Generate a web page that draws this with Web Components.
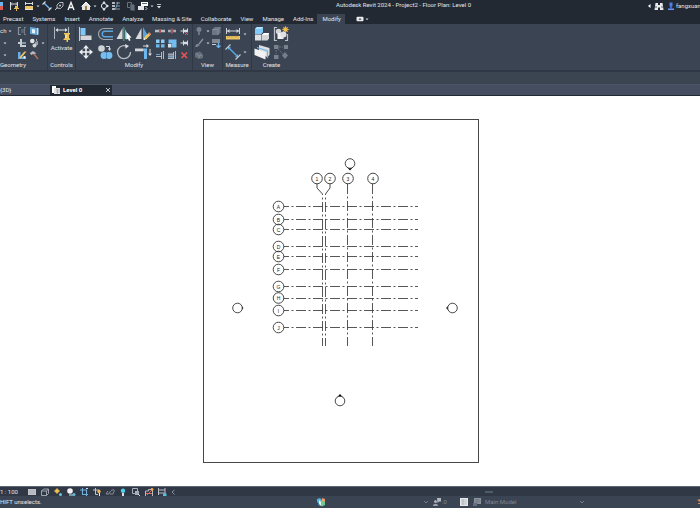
<!DOCTYPE html>
<html lang="en">
<head>
<meta charset="utf-8">
<title>Autodesk Revit 2024 - Project2 - Floor Plan: Level 0</title>
<style>
    html, body {
        height: 100%;
        margin: 0;
    }
    body {
        --bar-dark: #222933;
        --bar: #3b4453;
        --line: #303846;
        --text: #e2e5ea;
        --muted: #7d8694;
        color: var(--text);
        font: 6px/8px Roboto, "Open Sans", sans-serif;
        overflow: hidden;
    }
</style>
</head>
<body>
<revit-app></revit-app>

<script>
// Icon drawings: [width, height, markup]
const ICONS = {
    // quick access bar
    edge: [4, 10, '<path d="M0 1h3v4H0z" fill="#6fb4ea"/><path d="M0 5h3v4H0z" fill="#e2574f"/>'],
    dim: [10, 10, '<path d="M1.500 1v8M8.500 1v5M1.500 3h7" stroke="#d8dbe0"/><path d="M3 1.500L1.500 3 3 4.500M7 1.500L8.500 3 7 4.500" stroke="#d8dbe0" stroke-width=".7"/><path d="M6 5h3v2h1v1H8v2H7V8H5V7h1z" fill="#e6bd55"/>'],
    ruler: [10, 10, '<path d="M1.500 1v3M8.500 1v3M1 2.500h8" stroke="#d8dbe0"/><path d="M1 5h8v3.500H1z" fill="#efc765"/><path d="M1 8.500h8" stroke="#fff" stroke-width=".8"/>'],
    aligned: [10, 10, '<path d="M2 2l6 6" stroke="#6fb4ea" stroke-width="1.400"/><path d="M.5 3.500l3-3M6.500 9.500l3-3" stroke="#d8dbe0" stroke-width="1.200"/>'],
    tag: [10, 10, '<path d="M1 9l2.500-2.500" stroke="#c3c8cf"/><path d="M3 7V4l2.500-2.500H9V5L6.500 7.500z" stroke="#c3c8cf" stroke-width=".9"/><circle cx="6" cy="4.500" r="1" fill="#c3c8cf"/>'],
    letter: [10, 10, '<path d="M2 9L5 1.500 8 9M3.200 6.500h3.600" stroke="#f0f1f3" stroke-width="1.400"/>'],
    home: [10, 10, '<path d="M1 5l4-4 4 4v4H1z" fill="#e4e6e9"/><path d="M.5 5.500L5 1l4.500 4.500" stroke="#fff"/><path d="M4 5h2v4H4z" fill="#a47d3b"/>'],
    section: [10, 10, '<circle cx="5" cy="5" r="2.600" stroke="#e3e5e9"/><path d="M5 0l1.500 2h-3zM5 10l1.500-2h-3z" fill="#e3e5e9"/><path d="M8 3.500L10 5 8 6.500z" fill="#e3e5e9"/>'],
    thin: [10, 10, '<path d="M1 2h3M1 5h3M1 8h3" stroke="#e3e5e9" stroke-width="1.400"/><path d="M5 2h4M5 5h4M5 8h4" stroke="#a9b7c6" stroke-width=".8"/><path d="M4 9l3-8" stroke="#6fb4ea" stroke-width=".8"/>'],
    inactive: [10, 10, '<path d="M1.500 1.500h4v5h-4z" stroke="#6a727e"/><path d="M4 3h4v6H4z" fill="#505966"/><path d="M5 5h4M5 7h4M5 9h4" stroke="#858c97" stroke-width=".8"/>'],
    windows: [10, 10, '<path d="M3 1h7v4H3z" fill="#fff"/><path d="M4 2.500h5" stroke="#606976"/><path d="M0 5h6v4H0z" fill="#e3e5e9"/><path d="M7.500 6l1.500 1.500L7.500 9" stroke="#d8dbe0"/>'],
    caret: [4, 10, '<path d="M.5 4.500h3L2 6.200z" fill="#d0d4db"/>'],
    more: [6, 10, '<path d="M1 3.500h4" stroke="#e3e5e9" stroke-width=".8"/><path d="M1 5h4L3 7.500z" fill="#e3e5e9"/>'],
    left: [4, 10, '<path d="M3.500 3v4L1 5z" fill="#fff"/>'],
    binoculars: [10, 10, '<path d="M1.500 2h2.500v2h2V2h2.500L9.500 9H6V6.500H4V9H.5z" fill="#e8eaed"/><path d="M1 6h2M7 6h2" stroke="#59616d"/>'],
    person: [8, 10, '<path d="M2.500 1.500h3v4h-3z" fill="#4f7fe6"/><path d="M1 7.500h6V9H1z" fill="#6a97f5"/><path d="M3 5h2v3H3z" fill="#3c6bd2"/>'],
    panelmode: [10, 10, '<rect x="1.500" y="2.800" width="7" height="4.400" rx="1" fill="#e9ebee"/><path d="M3.500 5.800h3L5 4z" fill="#3a4250"/>'],

    // geometry
    cut: [10, 10, '<path d="M4 1.500H1.500v7H4" stroke="#89919d" stroke-width="1.200"/><path d="M4 4h3M4 6h3M9 1.500H7.500v7H9" stroke="#737c89" stroke-width="1.100"/>'],
    opening: [10, 10, '<path d="M1 1l7 1v7L1 8z" fill="#64aadd"/><path d="M3 3l3 .5v4L3 7z" fill="#e8f3fb"/><path d="M8 2h1.500v6.500L8 9z" fill="#bfe0f7"/>'],
    join: [10, 10, '<path d="M3 1h2v3h4v2H5v1h4v2H3V6H1V4h2z" fill="#c6cbd2"/><path d="M5 4h4v2H5z" fill="#7e99af"/>'],
    unite: [10, 10, '<circle cx="3.300" cy="3" r="2.300" fill="#e0e2e5"/><path d="M6 4l3-1v4H6z" fill="#9aa2ad"/><circle cx="5.500" cy="7.500" r="2" fill="#cfd3d8"/><path d="M7.500 1v2" stroke="#aab1ba"/>'],
    paint: [10, 10, '<path d="M1 2h2.500v5H9v2H1z" fill="#62aee8"/><path d="M3 8l5-6" stroke="#efc765" stroke-width="1.800"/><path d="M8 1.500l1 1" stroke="#e87962" stroke-width="1.500"/><path d="M6.500 6h2v2.500h-2z" fill="#e6eaf0"/>'],
    hammer: [10, 10, '<path d="M1 3l3-2 3 2-1.500 2L4 4 2 5z" fill="#b6bbc3"/><path d="M5 4l4 5" stroke="#b06d55" stroke-width="1.600"/>'],

    // controls
    activate: [16, 16, '<path d="M.5 1v12M14.500 1v6" stroke="#aeb4bd"/><path d="M2 4h11" stroke="#d8dbe0"/><path d="M4 2L1.500 4 4 6zM11 2l2.500 2L11 6z" fill="#d8dbe0"/><path d="M10 7h6v1l-1 1v3l1.500 1v1H14v2h-1.500v-2H9.500v-1l1.500-1V9l-1-1z" fill="#edc45c"/><path d="M12 9v3" stroke="#fff1c2"/>'],

    // modify
    align: [16, 16, '<path d="M1.500 1v14" stroke="#c9cdd3"/><path d="M2.500 2h5v7h-5z" fill="#82c6f4"/><path d="M2.500 9.500h11v4.500h-11z" fill="#d4d6d9"/>'],
    offset: [18, 16, '<path d="M17 2.500H8a5.500 5.500 0 0 0 0 11h9" stroke="#9fa6b0" stroke-width="1.200"/><path d="M17 5.200H9a2.800 2.800 0 0 0 0 5.600h8" stroke="#5ba5df" stroke-width="1.400"/>'],
    mirror: [16, 16, '<path d="M6.500 2v11H.5z" fill="#d7dadd"/><path d="M9 3v10h5z" fill="#7ebcea"/><path d="M7.800 1v14" stroke="#3f9a69" stroke-width="1.400"/><path d="M10.500 6l5 5.500-2 .3 1 2.500-1.500.7-1.100-2.500-1.400 1.200z" fill="#fff"/>'],
    mirrordraw: [16, 16, '<path d="M6.500 2v11H.5z" fill="#d7dadd"/><path d="M8 1v12h4V8z" fill="#58a5e0"/><path d="M8.500 14l1-3 4.500-4.500 2 2L11.500 13z" fill="#f0c75f"/><path d="M13 7.500l1.300-1.300 1.700 1.800-1.200 1.300z" fill="#ec7d67"/><path d="M8.500 14l.6-2 1.400 1.400z" fill="#fff"/>'],
    move: [16, 16, '<path d="M8 2.500v11M2.500 8h11" stroke="#eceef0" stroke-width="1.600"/><path d="M8 1l3 3.500H5zM8 15l3-3.500H5zM1 8l3.500-3v6zM15 8l-3.500-3v6z" fill="#eceef0"/>'],
    copy: [16, 16, '<circle cx="4.500" cy="4.500" r="3.300" fill="#cfd2d6"/><path d="M9 2.500h3.500V5" stroke="#d8dbe0"/><path d="M10.800 4.500h3.400L12.500 7z" fill="#d8dbe0"/><circle cx="7" cy="11.500" r="3.400" fill="#76bdf0"/><circle cx="12" cy="11.500" r="3.400" fill="#76bdf0"/><path d="M9.500 9.200v4.600" stroke="#3c80b5" stroke-width=".7"/>'],
    rotate: [16, 16, '<path d="M9 1.800A6.500 6.500 0 1 0 14.500 8" stroke="#b9bec6" stroke-width="1.300"/><path d="M9 0l4 2-3.500 2.700z" fill="#dfe2e6"/>'],
    trim: [18, 16, '<path d="M1 4.500h8v2.800H1z" fill="#d4d6d9"/><path d="M9 4.500h4V15h-3V7.300H9z" fill="#6cb7ee"/><path d="M9 2h4" stroke="#d8dbe0"/><path d="M12.500 0l2.500 2-2.500 2zM14 9.500h4L16 12z" fill="#d8dbe0"/><path d="M16 5v5" stroke="#d8dbe0"/>'],
    split: [10, 10, '<path d="M0 3.800h4v2.400H0zM6 3.800h4v2.400H6z" fill="#b9bec5"/><path d="M5 3v4" stroke="#df6060" stroke-width="1.200"/>'],
    gap: [10, 10, '<path d="M1 3.800h2.800v2.400H1zM6.200 3.800H9v2.400H6.200z" fill="#a8aeb7"/><path d="M5 2.500v5" stroke="#df6060" stroke-width="1.200"/>'],
    unpin: [10, 10, '<path d="M1.500 5h2.500M4.500 2.500v5M8.500 2.500v4" stroke="#d8dbe0"/><path d="M5 3.800h3v2.400H5z" fill="#d8dbe0"/><path d="M6 6l3 3M9 6L6 9" stroke="#ec5858"/>'],
    array: [10, 10, '<path d="M1 1.500h3.500V5H1zM6 1.500h3.500V5H6z" fill="#8accf7"/><path d="M1 6.300h3.500v3.200H1zM6 6.300h3.500v3.200H6z" fill="#6db9ef"/>'],
    scale: [10, 10, '<path d="M1.500 1.500h8v8H5V5.500H1.500z" fill="#72bcf0"/><path d="M1 6h3.500v3.500H1z" fill="#dce0e4"/>'],
    pin: [10, 10, '<path d="M1.500 5h2.500M4.500 2.500v5M8.500 2.500v5" stroke="#d8dbe0"/><path d="M5 3.800h3v2.400H5z" fill="#d8dbe0"/>'],
    extend: [10, 10, '<path d="M1 6.500h5M8.500 1v8M6.500 2v7" stroke="#b5bac2"/><path d="M1 4.500h4" stroke="#6d9fc4"/>'],
    extendall: [10, 10, '<path d="M1 4h5v5H1z" fill="#7e8793"/><path d="M1 4h5M1 8.500h5M8.500 1v8M6.500 2v7" stroke="#b5bac2"/><path d="M1 6.500h5" stroke="#78a9cd"/>'],
    remove: [10, 10, '<path d="M2.500 2.500l5.500 5.500M8 2.500L2.500 8" stroke="#f05454" stroke-width="1.500"/>'],

    // view
    bulb: [10, 10, '<circle cx="5" cy="3.500" r="2.500" fill="#77808c"/><path d="M4 6h2v3H4z" fill="#6b7480"/>'],
    box: [10, 10, '<path d="M1 3.500L4 1h5.500v5.500L7 9H1z" fill="#6d7683"/><path d="M1.500 3.500H7V9M7 3.500L9.500 1" stroke="#929aa5" stroke-width=".7"/>'],
    brush: [10, 10, '<path d="M9 1L5 6" stroke="#8b939e" stroke-width="1.300"/><path d="M1 9l1.500-3L5 6l.5 1.500L3 9z" fill="#7d8590"/>'],
    linework: [10, 10, '<path d="M1 2h8M1 4h8" stroke="#c9cdd3" stroke-width="1.200"/><path d="M1 6.500h4" stroke="#c9cdd3"/><path d="M7.500 4.500v5M5.500 7.500l2 2 2-2" stroke="#6ab4ec" stroke-width="1.200"/>'],
    hide: [10, 10, '<path d="M1 3l5-1.500 3 3V8L5 9 1 7z" fill="#66707d"/><path d="M2 3l3 3v2M5 6l3-1" stroke="#8a929e" stroke-width=".8"/>'],

    // measure
    measure: [16, 16, '<path d="M1.500 2v6M14.500 2v6M2 5h12" stroke="#cfd3d9"/><path d="M4.500 3L2 5l2.500 2zM11.500 3L14 5l-2.500 2z" fill="#cfd3d9"/><path d="M1 10h14v3.500H1z" fill="#efc765"/><path d="M3 10v2M5 10v1.500M7 10v2M9 10v1.500M11 10v2M13 10v1.500" stroke="#a8873d" stroke-width=".6"/>'],
    alignedbig: [16, 16, '<path d="M3.500 3.500l9 9" stroke="#59a9e6" stroke-width="1.400"/><path d="M3 3h3L3 6zM13 13v-3l-3 3z" fill="#59a9e6"/><path d="M.5 5.500l5-5M10.500 15.500l5-5" stroke="#c4c9d0" stroke-width="1.200"/>'],

    // create
    assembly: [16, 16, '<path d="M1 3l2-2h6v5L7.500 8H1z" fill="#80c8f6"/><path d="M1 3h6.500L9 1H3z" fill="#b4e0fb"/><path d="M1 8.500h6.500v6H1z" fill="#dedfe1"/><path d="M8 8.500L10 7h5v5.500L13.500 14.500H8z" fill="#d4d5d8"/><path d="M8 9h5.500L15 7h-5z" fill="#fff"/>'],
    group: [16, 16, '<path d="M4 1.500H1.500v13H4M12 14.500h2.500V8" stroke="#bdc2ca" stroke-width="1.200"/><circle cx="5.500" cy="5.500" r="2.700" fill="#d2d5d9"/><path d="M4.500 7h6v6h-6z" fill="#f0f0f0"/><circle cx="10.500" cy="8.500" r="3" fill="#e0e1e4"/><circle cx="12.500" cy="3.500" r="2.200" fill="#f4bf4b"/><path d="M12.500 0v7M9 3.500h7M10 1l5 5M15 1l-5 5" stroke="#f4bf4b" stroke-width=".7"/>'],
    parts: [16, 16, '<path d="M5 1l10.500 3v7L13 13 5 9z" fill="#dcdee0"/><path d="M3 3.500l10.500 3.500v7" stroke="#6eb4e6" stroke-width="1.200"/><path d="M.5 4.500l11 3.800V15.500l-11-4.500z" fill="#f2f2f2"/>'],
    similar: [16, 16, '<path d="M1 1h4.500v4H1zM11 1h4v4h-4zM1 11h4.500v4H1z" fill="#79818d"/><path d="M6 3h4M3.200 6v4M5 5l5 5" stroke="#69727f" stroke-dasharray="2 1"/><path d="M12 8l3 3.500-3 3.500-3-3.500z" fill="#757e8a"/>'],

    // document tab
    plan: [8, 10, '<path d="M0 1h4v7H0z" fill="#fff"/><path d="M2 3h6v6H2z" fill="#dfe1e4"/><path d="M4 5h4M4 7h4M5.500 4v5" stroke="#8c939d" stroke-width=".5"/>'],
    close: [8, 10, '<path d="M2 3l4 4M6 3L2 7" stroke="#d8dbe0" stroke-width=".9"/>'],

    // view controls
    detail: [10, 10, '<path d="M1 2h8v6H1z" fill="#c6c9cd"/><path d="M1 4h8M1 6h8M3 2v6M5 2v6M7 2v6" stroke="#a0a5ad" stroke-width=".5"/>'],
    cube: [10, 10, '<path d="M1.500 4h5v4.500h-5zM1.500 4l2-2h5v4.500l-2 2M6.500 4l2-2" stroke="#aab0b9" stroke-width=".9"/>'],
    sun: [10, 10, '<circle cx="4" cy="4" r="2" fill="#f2c14e"/><path d="M4 1v6M1 4h6" stroke="#f2c14e" stroke-width=".8"/><circle cx="7.500" cy="7.500" r="1.500" fill="#64c3dd"/>'],
    shadow: [10, 10, '<circle cx="4" cy="4" r="2.800" fill="#f1f2f3"/><path d="M3 8h4" stroke="#b7bcc4" stroke-width="1.300"/><circle cx="8" cy="7.500" r="1.500" fill="#54c4df"/>'],
    crop: [10, 10, '<path d="M3.500 1v6.500H9M1 3h6.500v6" stroke="#6fb0dc" stroke-width="1.100"/><path d="M7 1.500h2" stroke="#d8dbe0"/>'],
    cropshow: [10, 10, '<path d="M3.500 1v6.500H6M1 3h6.500v2" stroke="#bfc4cb"/><circle cx="7" cy="4.500" r="1.700" fill="#f0b44e"/><path d="M7.500 6v3" stroke="#e6e8eb"/>'],
    glasses: [10, 10, '<path d="M1 7l2-3M6 3.500l3-1M1 7h3l1.500-3M5 7h3l1.500-4" stroke="#8d95a1" stroke-width=".9"/>'],
    reveal: [10, 10, '<circle cx="5" cy="3.700" r="2.200" fill="#53cfe8"/><path d="M4 6h2v3H4z" fill="#d9dde2"/>'],
    temp: [10, 10, '<path d="M1.500 1.500h5v5h-5z" stroke="#aab0b9"/><path d="M4 4h4v4H4z" fill="#a6acb6"/><path d="M7 7l2.500 2.500" stroke="#d8dbe0"/>'],
    analytic: [10, 10, '<path d="M1.500 9V4h3V2.500h4V9" stroke="#c4c8ce" stroke-width=".9"/><path d="M2 6.500h6M3 8l4-4" stroke="#e0685c"/><circle cx="8" cy="2.500" r="1.400" fill="#efad50"/>'],
    constraint: [10, 10, '<path d="M1.500 1v7M8 1v7M1.500 3h6.500M1.500 6h6.500" stroke="#b8bdc5"/><path d="M6 6.500h3.500V9H6z" fill="#57c1dc"/>'],
    back: [6, 10, '<path d="M4.500 3L2 5l2.500 2.500" stroke="#949ca8" stroke-width=".9"/>'],

    // status bar
    worksets: [10, 10, '<path d="M1 2l3-1 2 2v3L3 7 1 5z" fill="#4fb3df"/><path d="M4 4l3-1 2 2v3L6 9.500 4 8z" fill="#6ecb8c"/><path d="M6 1l3 1v3L6 4z" fill="#ef9b6d"/><path d="M3 3v4l2 2V5z" fill="#eaf6f7"/><path d="M2 7l2 2" stroke="#3786c6"/>'],
    down: [6, 10, '<path d="M1 4l2 2 2-2" stroke="#7a8391" stroke-width=".9"/>'],
    requests: [10, 10, '<circle cx="3.500" cy="4.500" r="1.500" fill="#aab0b9"/><path d="M1 9c0-3 5-3 5 0z" fill="#9aa1ac"/><path d="M5 1h4v3.500H7L5.500 6z" fill="#b4bac2"/>'],
    options: [10, 10, '<path d="M1 1h8v8H1z" fill="#e8e9eb"/><path d="M2 3h6M2 5h6M2 7h6M4 2v6" stroke="#9ba1aa" stroke-width=".6"/>'],
    exclude: [10, 10, '<path d="M2 1h7v6H2z" fill="#8a929d"/><path d="M1 6h4v3H1z" fill="#646d7a"/><path d="M3 3h5M3 5h5M5 2v5" stroke="#656e7b" stroke-width=".6"/>'],
    link: [4, 10, '<path d="M1 3l3-1v3zM2 6h2v1H2z" fill="#d98b58"/>']
};

function svgFor(name) {
    const [w, h, markup] = ICONS[name];
    return `<svg width="${w}" height="${h}" viewBox="0 0 ${w} ${h}" fill="none" aria-hidden="true">${markup}</svg>`;
}

// <tool-button icon="move" label="Move">: an icon button, optional slotted text
class ToolButton extends HTMLElement {
    constructor() {
        super();
        this.attachShadow({ mode: 'open' });
    }

    connectedCallback() {
        this.shadowRoot.innerHTML = `
        <style>
        :host { display: inline-flex; flex: none; }
        button {
            display: inline-flex;
            align-items: center;
            justify-content: center;
            gap: 1px;
            margin: 0;
            padding: 0;
            border: 0;
            background: none;
            color: inherit;
            font: inherit;
            white-space: nowrap;
        }
        button:hover { background: rgba(255, 255, 255, 0.12); }
        svg { display: block; flex: none; }
        </style>
        <button type="button" aria-label="${this.getAttribute('label')}">${svgFor(this.getAttribute('icon'))}<slot></slot></button>
        `;
    }
}
customElements.define('tool-button', ToolButton);

class TitleBar extends HTMLElement {
    constructor() {
        super();
        this.attachShadow({ mode: 'open' });
        this.shadowRoot.innerHTML = `
        <style>
        :host {
            display: flex;
            align-items: center;
            height: 12px;
            background: var(--bar-dark);
        }
        .quick { display: flex; flex: 0 0 48%; gap: 5px; }
        .group { display: flex; gap: 2px; }
        h1 {
            flex: 1;
            margin: 0;
            padding-bottom: 2px;
            font: inherit;
            white-space: nowrap;
        }
        .user { display: flex; align-items: center; gap: 3px; width: 53px; overflow: hidden; }
        </style>
        <nav class="quick" aria-label="Quick access">
            <div class="group"><tool-button icon="edge" label="Print"></tool-button></div>
            <div class="group"><tool-button icon="dim" label="Dimension"></tool-button></div>
            <div class="group">
                <tool-button icon="ruler" label="Measure"></tool-button>
                <tool-button icon="caret" label="Measure options"></tool-button>
                <tool-button icon="aligned" label="Aligned dimension"></tool-button>
                <tool-button icon="tag" label="Tag by category"></tool-button>
                <tool-button icon="letter" label="Text note"></tool-button>
            </div>
            <div class="group">
                <tool-button icon="home" label="Default 3D view"></tool-button>
                <tool-button icon="caret" label="3D options"></tool-button>
                <tool-button icon="section" label="Section"></tool-button>
                <tool-button icon="thin" label="Thin lines"></tool-button>
            </div>
            <div class="group">
                <tool-button icon="inactive" label="Close inactive views"></tool-button>
                <tool-button icon="windows" label="Switch windows"></tool-button>
                <tool-button icon="caret" label="Window list"></tool-button>
                <tool-button icon="more" label="Customize"></tool-button>
            </div>
        </nav>
        <h1>Autodesk Revit 2024 - Project2 - Floor Plan: Level 0</h1>
        <div class="user">
            <tool-button icon="left" label="Collapse"></tool-button>
            <tool-button icon="binoculars" label="Search"></tool-button>
            <tool-button icon="person" label="Account">fangxuan</tool-button>
        </div>
        `;
    }
}
customElements.define('title-bar', TitleBar);

class RibbonTabs extends HTMLElement {
    constructor() {
        super();
        this.attachShadow({ mode: 'open' });
        const names = ['Precast', 'Systems', 'Insert', 'Annotate', 'Analyze', 'Massing & Site',
            'Collaborate', 'View', 'Manage', 'Add-Ins', 'Modify'];
        const tabs = names.map(name => `<button type="button" role="tab" aria-selected="${name === 'Modify'}">${name.replace('&', '&amp;')}</button>`);
        this.shadowRoot.innerHTML = `
        <style>
        :host {
            display: flex;
            align-items: flex-end;
            height: 12px;
            background: var(--bar-dark);
        }
        [role=tablist] { display: flex; }
        button {
            height: 10px;
            padding: 0 4px 0 5px;
            border: 0;
            background: none;
            color: inherit;
            font: inherit;
            white-space: nowrap;
        }
        button:first-child { padding-left: 3px; }
        [aria-selected=true] { background: var(--bar); }
        .mode { display: flex; padding-left: 10px; }
        </style>
        <div role="tablist">${tabs.join('')}</div>
        <div class="mode">
            <tool-button icon="panelmode" label="Minimize ribbon"></tool-button>
            <tool-button icon="caret" label="Ribbon options"></tool-button>
        </div>
        `;
    }
}
customElements.define('ribbon-tabs', RibbonTabs);

// One titled group of ribbon tools
class RibbonPanel extends HTMLElement {
    constructor() {
        super();
        this.attachShadow({ mode: 'open' });
    }

    connectedCallback() {
        this.shadowRoot.innerHTML = `
        <style>
        :host {
            display: flex;
            flex-direction: column;
            border-right: 1px solid var(--line);
            box-sizing: border-box;
        }
        :host(:last-of-type) { border-right: 0; }
        .tools { display: flex; flex: 1; }
        footer { height: 9px; text-align: center; white-space: nowrap; }
        </style>
        <div class="tools"><slot></slot></div>
        <footer part="footer">${this.getAttribute('heading')}</footer>
        `;
    }
}
customElements.define('ribbon-panel', RibbonPanel);

class RibbonBar extends HTMLElement {
    constructor() {
        super();
        this.attachShadow({ mode: 'open' });
        this.shadowRoot.innerHTML = `
        <style>
        :host {
            display: flex;
            height: 46px;
            background: var(--bar);
            border-bottom: 2px solid var(--line);
        }
        .small { display: grid; grid-auto-flow: column; grid-template-rows: repeat(3, 12px); grid-auto-columns: 12px; place-items: center; padding-top: 1px; }
        .big { display: grid; grid-template-rows: repeat(2, 18px); grid-auto-flow: column; grid-auto-columns: 19px; place-items: center; padding-top: 1px; }
        .carets { grid-auto-columns: 5px; }
        .cut { display: grid; grid-template-rows: repeat(3, 12px); width: 16px; padding-top: 1px; align-items: center; }
        .cut div { display: flex; align-items: center; gap: 2px; }
        .cut div + div { padding-left: 3px; }
        .column { display: flex; flex: 1; flex-direction: column; align-items: center; gap: 2px; padding-top: 2px; }
        .geometry { width: 48px; }
        .geometry::part(footer) { text-align: left; }
        .controls { width: 28px; }
        .modify { width: 117px; }
        .modify .small { padding-left: 2px; }
        .view { width: 30px; }
        .measure { width: 29px; }
        .create { width: 39px; }
        </style>
        <ribbon-panel class="geometry" heading="Geometry">
            <div class="cut">
                <div>ch <tool-button icon="caret" label="Notch options"></tool-button></div>
                <div><tool-button icon="caret" label="Cut options"></tool-button></div>
                <div><tool-button icon="caret" label="Join options"></tool-button></div>
            </div>
            <div class="small">
                <tool-button icon="cut" label="Cope"></tool-button>
                <tool-button icon="join" label="Wall joins"></tool-button>
                <tool-button icon="paint" label="Paint"></tool-button>
                <tool-button icon="opening" label="Split face"></tool-button>
                <tool-button icon="unite" label="Unjoin"></tool-button>
                <tool-button icon="hammer" label="Demolish"></tool-button>
            </div>
            <div class="small carets">
                <span></span>
                <tool-button icon="caret" label="Unjoin options"></tool-button>
            </div>
        </ribbon-panel>
        <ribbon-panel class="controls" heading="Controls">
            <div class="column">
                <tool-button icon="activate" label="Activate controls"></tool-button>
                <span>Activate</span>
            </div>
        </ribbon-panel>
        <ribbon-panel class="modify" heading="Modify">
            <div class="big">
                <tool-button icon="align" label="Align"></tool-button>
                <tool-button icon="move" label="Move"></tool-button>
                <tool-button icon="offset" label="Offset"></tool-button>
                <tool-button icon="copy" label="Copy"></tool-button>
                <tool-button icon="mirror" label="Mirror, pick axis"></tool-button>
                <tool-button icon="rotate" label="Rotate"></tool-button>
                <tool-button icon="mirrordraw" label="Mirror, draw axis"></tool-button>
                <tool-button icon="trim" label="Trim to corner"></tool-button>
            </div>
            <div class="small">
                <tool-button icon="split" label="Split element"></tool-button>
                <tool-button icon="array" label="Array"></tool-button>
                <tool-button icon="extend" label="Extend single"></tool-button>
                <tool-button icon="gap" label="Split with gap"></tool-button>
                <tool-button icon="scale" label="Scale"></tool-button>
                <tool-button icon="extendall" label="Extend multiple"></tool-button>
                <tool-button icon="unpin" label="Unpin"></tool-button>
                <tool-button icon="pin" label="Pin"></tool-button>
                <tool-button icon="remove" label="Delete"></tool-button>
            </div>
        </ribbon-panel>
        <ribbon-panel class="view" heading="View">
            <div class="small">
                <tool-button icon="bulb" label="Hide in view"></tool-button>
                <tool-button icon="brush" label="Override graphics"></tool-button>
                <tool-button icon="hide" label="Displace elements"></tool-button>
            </div>
            <div class="small carets">
                <tool-button icon="caret" label="Hide options"></tool-button>
                <tool-button icon="caret" label="Override options"></tool-button>
            </div>
            <div class="small">
                <tool-button icon="box" label="Selection box"></tool-button>
                <tool-button icon="linework" label="Linework"></tool-button>
            </div>
        </ribbon-panel>
        <ribbon-panel class="measure" heading="Measure">
            <div class="big">
                <tool-button icon="measure" label="Measure"></tool-button>
                <tool-button icon="alignedbig" label="Dimension"></tool-button>
            </div>
            <div class="big carets">
                <tool-button icon="caret" label="Measure options"></tool-button>
                <tool-button icon="caret" label="Dimension options"></tool-button>
            </div>
        </ribbon-panel>
        <ribbon-panel class="create" heading="Create">
            <div class="big">
                <tool-button icon="assembly" label="Create assembly"></tool-button>
                <tool-button icon="parts" label="Create parts"></tool-button>
                <tool-button icon="group" label="Create group"></tool-button>
                <tool-button icon="similar" label="Create similar"></tool-button>
            </div>
        </ribbon-panel>
        `;
    }
}
customElements.define('ribbon-bar', RibbonBar);

class ViewTabs extends HTMLElement {
    constructor() {
        super();
        this.attachShadow({ mode: 'open' });
        this.shadowRoot.innerHTML = `
        <style>
        :host {
            display: flex;
            height: 10px;
            background: #454e60;
            border-top: 1px solid #4a5662;
            border-bottom: 1px solid var(--bar-dark);
        }
        .tab {
            display: flex;
            align-items: center;
            width: 50px;
        }
        .tab.active {
            box-sizing: border-box;
            width: 62px;
            padding-left: 2px;
            gap: 3px;
            background: var(--bar-dark);
            color: #fff;
            font-weight: bold;
        }
        a { flex: 1; color: inherit; text-decoration: none; }
        </style>
        <div class="tab"><a href="#3d">{3D}</a></div>
        <div class="tab active">
            <tool-button icon="plan" label="Floor plan"></tool-button>
            <a href="#level0">Level 0</a>
            <tool-button icon="close" label="Close view"></tool-button>
        </div>
        `;
    }
}
customElements.define('view-tabs', ViewTabs);

class FloorPlan extends HTMLElement {
    constructor() {
        super();
        this.attachShadow({ mode: 'open' });
        const rows = { A: 206.5, B: 219.5, C: 229.5, D: 246.5, E: 256.5, F: 269.5, G: 286.5, H: 298, I: 310.5, J: 327.5 };
        const columns = { 1: 317, 2: 330, 3: 348, 4: 373 };
        let grid = '';
        for (const [name, y] of Object.entries(rows)) {
            const lineY = Math.floor(y) + 0.5;
            grid += `<path class="grid" d="M284 ${lineY}H418" stroke-dashoffset="5"/>
                <circle cx="278.500" cy="${y}" r="5.300"/><text x="278.500" y="${y + 2}">${name}</text>`;
        }
        for (const [name, x] of Object.entries(columns)) {
            grid += `<circle cx="${x}" cy="178.500" r="5.300"/><text x="${x}" y="180.500">${name}</text>`;
        }
        this.shadowRoot.innerHTML = `
        <style>
        :host { display: block; flex: 1; min-height: 0; background: #fff; }
        svg { display: block; width: 100%; height: 100%; }
        path, circle, rect { fill: none; stroke: #333; stroke-width: 0.9; }
        .grid { stroke: #444; stroke-dasharray: 10 2.5 2 2.5; }
        .head { fill: #000; stroke: none; }
        .marker { fill: #fff; }
        text { font: 5px "Liberation Sans", sans-serif; fill: #222; text-anchor: middle; }
        </style>
        <svg viewBox="0 96 700 390" role="img" aria-label="Level 0 grids">
            <rect x="203.500" y="119.500" width="275" height="343"/>
            ${grid}
            <path d="M317 184v4l5.500 6M330 184v4l-4.500 6"/>
            <path class="grid" d="M322.500 194V346M325.500 194V346" stroke-dashoffset="9"/>
            <path class="grid" d="M347.500 184V346M372.500 184V346"/>
            <path class="head" d="M347 167h6l-3 3.500zM240 304.500v7l3.500-3.500zM450 304.500v7l-4-3.500zM336.500 398h7l-3.500-4z"/>
            <circle class="marker" cx="350" cy="163.500" r="4.800"/>
            <circle class="marker" cx="237.500" cy="308" r="4.800"/>
            <circle class="marker" cx="452.500" cy="308" r="4.800"/>
            <circle class="marker" cx="340" cy="401" r="4.800"/>
        </svg>
        `;
    }
}
customElements.define('floor-plan', FloorPlan);

class ViewControls extends HTMLElement {
    constructor() {
        super();
        this.attachShadow({ mode: 'open' });
        const tools = {
            detail: 'Detail level', cube: 'Visual style', sun: 'Sun path', shadow: 'Shadows',
            crop: 'Crop view', cropshow: 'Show crop region', glasses: 'Temporary hide',
            reveal: 'Reveal hidden elements', temp: 'Temporary view properties',
            analytic: 'Analytical model', constraint: 'Reveal constraints', back: 'Scroll left'
        };
        const buttons = Object.keys(tools).map(icon => `<tool-button icon="${icon}" label="${tools[icon]}"></tool-button>`);
        this.shadowRoot.innerHTML = `
        <style>
        :host {
            display: flex;
            align-items: center;
            height: 9px;
            background: var(--line);
            border-top: 1px solid #606873;
        }
        .scale {
            width: 27px;
            padding: 0;
            border: 0;
            background: none;
            color: inherit;
            font: inherit;
            text-align: left;
            white-space: nowrap;
        }
        .tools { display: flex; flex: 1; gap: 3px; }
        .scrollbar { flex: 0 0 215px; }
        .thumb { width: 8px; height: 2px; background: #4e5d6b; }
        </style>
        <button class="scale" type="button">1 : 100</button>
        <div class="tools">${buttons.join('')}</div>
        <div class="scrollbar"><div class="thumb"></div></div>
        `;
    }
}
customElements.define('view-controls', ViewControls);

class StatusBar extends HTMLElement {
    constructor() {
        super();
        this.attachShadow({ mode: 'open' });
        this.shadowRoot.innerHTML = `
        <style>
        :host {
            display: flex;
            align-items: center;
            height: 12px;
            background: var(--bar);
        }
        .hint { flex: 0 0 45%; }
        .worksets { flex: 1; display: flex; padding-left: 1px; }
        .right { display: flex; align-items: center; gap: 3px; color: var(--muted); }
        .requests { display: flex; align-items: center; width: 24px; }
        .field { display: flex; align-items: center; width: 100px; }
        select {
            flex: 1;
            appearance: none;
            margin: 0;
            padding: 0;
            border: 0;
            background: none;
            color: inherit;
            font: inherit;
        }
        .link { width: 112px; display: flex; justify-content: flex-end; }
        </style>
        <span class="hint">HIFT unselects.</span>
        <div class="worksets"><tool-button icon="worksets" label="Worksets"></tool-button></div>
        <div class="right">
            <tool-button icon="down" label="Active workset"></tool-button>
            <div class="requests"><tool-button icon="requests" label="Editing requests"></tool-button>:0</div>
            <tool-button icon="options" label="Design options"></tool-button>
            <tool-button icon="exclude" label="Exclude options"></tool-button>
            <div class="field">
                <select aria-label="Active design option"><option>Main Model</option></select>
                <tool-button icon="down" label="Open design options"></tool-button>
            </div>
            <div class="link"><tool-button icon="link" label="Select links"></tool-button></div>
        </div>
        `;
    }
}
customElements.define('status-bar', StatusBar);

class RevitApp extends HTMLElement {
    constructor() {
        super();
        this.attachShadow({ mode: 'open' });
        this.shadowRoot.innerHTML = `
        <style>
        :host { display: flex; flex-direction: column; height: 100vh; }
        .options { height: 12px; background: #3b4552; }
        </style>
        <title-bar></title-bar>
        <ribbon-tabs></ribbon-tabs>
        <ribbon-bar></ribbon-bar>
        <div class="options"></div>
        <view-tabs></view-tabs>
        <floor-plan></floor-plan>
        <view-controls></view-controls>
        <status-bar></status-bar>
        `;
    }
}
customElements.define('revit-app', RevitApp);
</script>
</body>
</html>
